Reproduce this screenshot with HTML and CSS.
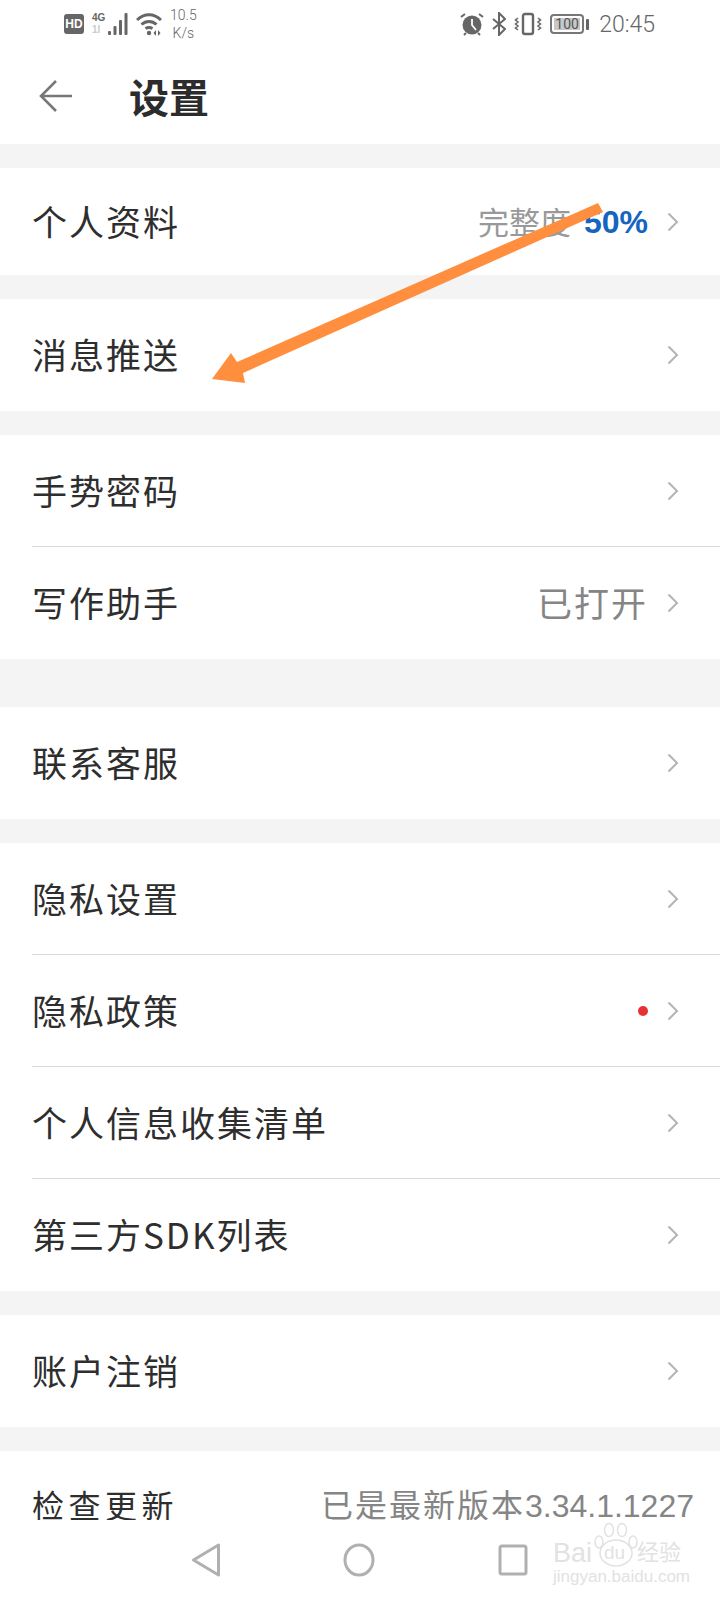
FILE: index.html
```html
<!DOCTYPE html>
<html lang="zh-CN">
<head>
    <meta charset="UTF-8">
    <meta name="viewport" content="width=device-width, initial-scale=1.0">
    <title>设置</title>
    <link rel="stylesheet" href="styles.css">
</head>
<body>
<svg class="sprite" width="0" height="0">
    <symbol id="chevron" viewBox="0 0 12 20">
        <path d="M1.500 1.500l8.500 8.500-8.500 8.500" fill="none" stroke="#b4b4b4" stroke-width="2"/>
    </symbol>
</svg>

<div class="page">
    <div class="content">
        <header class="top">
            <div class="status">
                <div class="status-group">
                    <span class="hd">HD</span>
                    <div class="net"><span class="net-g">4G</span><span class="net-sub">1l</span></div>
                    <svg class="bars" width="20" height="24" viewBox="0 0 20 24" fill="#666">
                        <rect x="0" y="19" width="3" height="4" rx="1"/>
                        <rect x="5.500" y="14" width="3" height="9" rx="1"/>
                        <rect x="11" y="8" width="3" height="15" rx="1"/>
                        <rect x="16.500" y="1" width="3" height="22" rx="1"/>
                    </svg>
                    <svg width="26" height="24" viewBox="0 0 26 24" fill="none" stroke="#666" stroke-width="3">
                        <path d="M1 8C8 1 18 1 25 8"/>
                        <path d="M5.500 12.500C10 8.500 16 8.500 20.500 12.500"/>
                        <path d="M9.500 16.500C12 15 14 15 16.500 16.500"/>
                        <circle cx="13" cy="21" r="2.200" fill="#666" stroke="none"/>
                        <path d="M20 18l-2.500 3 2.500 3zM22 18l2.500 3-2.500 3z" fill="#666" stroke="none"/>
                    </svg>
                    <div class="speed">10.5<br>K/s</div>
                </div>
                <div class="status-group">
                    <svg width="24" height="24" viewBox="0 0 24 24">
                        <circle cx="12" cy="13" r="9.500" fill="#666"/>
                        <path d="M12 7v6l4 5" fill="none" stroke="#fff" stroke-width="1.800"/>
                        <path d="M1 5l4-3M23 5l-4-3M4 23l2-2M20 23l-2-2" stroke="#666" stroke-width="2"/>
                    </svg>
                    <svg width="14" height="24" viewBox="1 0 14 24" fill="none" stroke="#666" stroke-width="2">
                        <path d="M2 7l12 10-6 6V1l6 6L2 17"/>
                    </svg>
                    <svg width="28" height="24" viewBox="0 0 28 24" fill="none" stroke="#666" stroke-width="2.400">
                        <rect x="9" y="2" width="10" height="20" rx="2"/>
                        <path d="M4 6L1.500 8 4 10l-2.500 2L4 14l-2.500 2L4 18M24 6l2.500 2L24 10l2.500 2L24 14l2.500 2L24 18" stroke-width="1.600"/>
                    </svg>
                    <div class="battery">
                        <div class="battery-body"><span class="battery-num">100</span></div>
                        <span class="battery-tip"></span>
                    </div>
                    <span class="clock">20:45</span>
                </div>
            </div>
            <div class="titlebar">
                <svg class="back" width="34" height="32" viewBox="0 0 34 32" fill="none" stroke="#777" stroke-width="2.600">
                    <path d="M33 16H3M17 1L2 16l15 15"/>
                </svg>
                <h1>设置</h1>
            </div>
        </header>

        <section class="group">
            <div class="row row-short">
                <span>个人资料</span>
                <div class="row-end">
                    <span class="value value-light">完整度</span>
                    <span class="percent">50%</span>
                    <svg class="chevron"><use href="#chevron"/></svg>
                </div>
            </div>
        </section>

        <section class="group">
            <div class="row">
                <span>消息推送</span>
                <svg class="chevron"><use href="#chevron"/></svg>
            </div>
        </section>

        <section class="group">
            <div class="row line">
                <span>手势密码</span>
                <svg class="chevron"><use href="#chevron"/></svg>
            </div>
            <div class="row">
                <span>写作助手</span>
                <div class="row-end">
                    <span class="value">已打开</span>
                    <svg class="chevron"><use href="#chevron"/></svg>
                </div>
            </div>
        </section>

        <section class="group group-wide">
            <div class="row">
                <span>联系客服</span>
                <svg class="chevron"><use href="#chevron"/></svg>
            </div>
        </section>

        <section class="group">
            <div class="row line">
                <span>隐私设置</span>
                <svg class="chevron"><use href="#chevron"/></svg>
            </div>
            <div class="row line">
                <span>隐私政策</span>
                <div class="row-end">
                    <span class="dot"></span>
                    <svg class="chevron"><use href="#chevron"/></svg>
                </div>
            </div>
            <div class="row line">
                <span>个人信息收集清单</span>
                <svg class="chevron"><use href="#chevron"/></svg>
            </div>
            <div class="row">
                <span>第三方SDK列表</span>
                <svg class="chevron"><use href="#chevron"/></svg>
            </div>
        </section>

        <section class="group">
            <div class="row">
                <span>账户注销</span>
                <svg class="chevron"><use href="#chevron"/></svg>
            </div>
        </section>

        <section class="group">
            <div class="row row-update">
                <span class="update-name">检查更新</span>
                <span class="value update-value">已是最新版本<span class="version">3.34.1.1227</span></span>
            </div>
        </section>
    </div>

    <nav class="navbar">
        <svg width="30" height="34" viewBox="0 0 30 34" fill="none" stroke="#b0b0b0" stroke-width="3" stroke-linejoin="round">
            <path d="M28.500 2v30L3.500 17z"/>
        </svg>
        <svg width="32" height="34" viewBox="0 0 32 34" fill="none" stroke="#b0b0b0" stroke-width="3">
            <ellipse cx="16" cy="17" rx="14" ry="15"/>
        </svg>
        <svg width="30" height="32" viewBox="0 0 30 32" fill="none" stroke="#b0b0b0" stroke-width="3">
            <rect x="2" y="2" width="26" height="28" rx="2"/>
        </svg>
    </nav>

    <!-- annotation drawn on top of the screenshot -->
    <svg class="arrow" width="720" height="420" viewBox="0 0 720 420">
        <polygon fill="#ff8f3f" points="598,203 603,212 243,373 245,383 212,379 231,353 237,362"/>
    </svg>

    <div class="watermark">
        <svg class="paw" width="46" height="46" viewBox="0 0 46 46" fill="none" stroke="#e2e2e2" stroke-width="1.500">
            <ellipse cx="6" cy="20" rx="4" ry="6"/>
            <ellipse cx="16" cy="8" rx="4.500" ry="6.500"/>
            <ellipse cx="29" cy="8" rx="4.500" ry="6.500"/>
            <ellipse cx="40" cy="20" rx="4" ry="6"/>
            <ellipse cx="23" cy="31" rx="16" ry="13"/>
        </svg>
        <div class="wm-logo"><span>Bai</span><span class="wm-du">du</span><span>经验</span></div>
        <div class="wm-url">jingyan.baidu.com</div>
    </div>
</div>
</body>
</html>
```

FILE: styles.css
```css
/* General */
body {
    margin: 0;
    font-family: "Noto Sans CJK SC", "Noto Sans", sans-serif;
    color: #2e2e2e;
    background-color: #fff;
}

.sprite {
    position: absolute;
}

.page {
    position: relative;
    display: flex;
    flex-direction: column;
    height: 1600px;
    overflow: hidden;
    background-color: #f4f4f4;
}

.content {
    flex: 1;
    min-height: 0;
}

/* Header */
.top {
    height: 144px;
    background-color: #fff;
}

.status {
    display: flex;
    justify-content: space-between;
    align-items: center;
    height: 48px;
    padding: 0 65px 0 64px;
    color: #666;
}

.status-group {
    display: flex;
    align-items: center;
    gap: 8px;
}

.hd {
    width: 20px;
    height: 20px;
    border-radius: 3px;
    background-color: #666;
    color: #fff;
    font: bold 12px/20px "Liberation Sans", sans-serif;
    text-align: center;
}

.net {
    display: flex;
    flex-direction: column;
    width: 12px;
    font: bold 10px/12px "Liberation Sans", sans-serif;
}

.net-sub {
    color: #ccc;
}

.bars {
    margin-left: -4px;
}

.speed {
    font: 300 14px/18px "Roboto", sans-serif;
    text-align: center;
}

.battery {
    display: flex;
    align-items: center;
    gap: 2px;
}

.battery-body {
    width: 34px;
    height: 20px;
    padding: 2px;
    box-sizing: border-box;
    border: 2px solid #777;
    border-radius: 4px;
}

.battery-num {
    display: block;
    height: 12px;
    background-color: #c8c8c8;
    color: #555;
    font: 14px/12px "Roboto", sans-serif;
    text-align: center;
}

.battery-tip {
    width: 3px;
    height: 11px;
    border-radius: 1px;
    background-color: #666;
}

.clock {
    margin-left: 2px;
    font: 300 23px/1 "Roboto", sans-serif;
}

.titlebar {
    display: flex;
    align-items: center;
    gap: 56px;
    height: 96px;
    padding: 0 0 0 39px;
}

.titlebar h1 {
    margin: 0;
    font-size: 40px;
    font-weight: 700;
    color: #2c2c2c;
}

/* Settings rows */
.group {
    margin-top: 24px;
    background-color: #fff;
}

.group-wide {
    margin-top: 48px;
}

.row {
    display: flex;
    justify-content: space-between;
    align-items: center;
    height: 112px;
    margin-left: 32px;
    padding-right: 41px;
    box-sizing: border-box;
    font-size: 35px;
    letter-spacing: 2px;
}

.row > span,
.value {
    margin-bottom: 3px;
}

.row-short {
    height: 107px;
}

.line {
    border-bottom: 1px solid #d8d8d8;
}

.row-end {
    display: flex;
    align-items: center;
}

.value {
    color: #858585;
}

.value-light {
    color: #999;
    font-size: 31px;
    letter-spacing: 0;
}

.percent {
    margin-left: 13px;
    color: #1565c0;
    font: 700 32px/1 "Liberation Sans", sans-serif;
    letter-spacing: 0;
}

.dot {
    width: 10px;
    height: 10px;
    border-radius: 50%;
    background-color: #e53333;
}

.chevron {
    width: 12px;
    height: 20px;
    margin-left: 19px;
}

/* Last row runs under the nav bar */
.row-update {
    padding-right: 26px;
    line-height: 32px;
}

.row > .update-name,
.row > .update-value {
    margin-bottom: 6px;
}

.update-name {
    font-size: 32px;
    letter-spacing: 4.5px;
}

.update-value {
    font-size: 32px;
}

.version {
    font: 32px/32px "Liberation Sans", sans-serif;
    letter-spacing: 0;
}

/* Bottom nav */
.navbar {
    position: relative;
    display: flex;
    justify-content: center;
    align-items: center;
    gap: 123px;
    height: 80px;
    padding-right: 2px;
    background-color: #fff;
}

/* Overlays */
.arrow {
    position: absolute;
    top: 0;
    left: 0;
}

.watermark {
    position: absolute;
    left: 553px;
    top: 1522px;
    width: 128px;
    height: 64px;
    color: #e2e2e2;
}

.paw {
    position: absolute;
    left: 40px;
    top: 0;
}

.wm-logo {
    position: relative;
    display: flex;
    justify-content: space-between;
    align-items: center;
    height: 24px;
    margin-top: 19px;
    font: 27px/24px "Liberation Sans", sans-serif;
    white-space: nowrap;
}

.wm-du {
    font-size: 19px;
}

.wm-logo span:last-child {
    font-size: 22px;
}

.wm-url {
    margin-top: 3px;
    font: 17px/18px "Liberation Sans", sans-serif;
    white-space: nowrap;
}
```
